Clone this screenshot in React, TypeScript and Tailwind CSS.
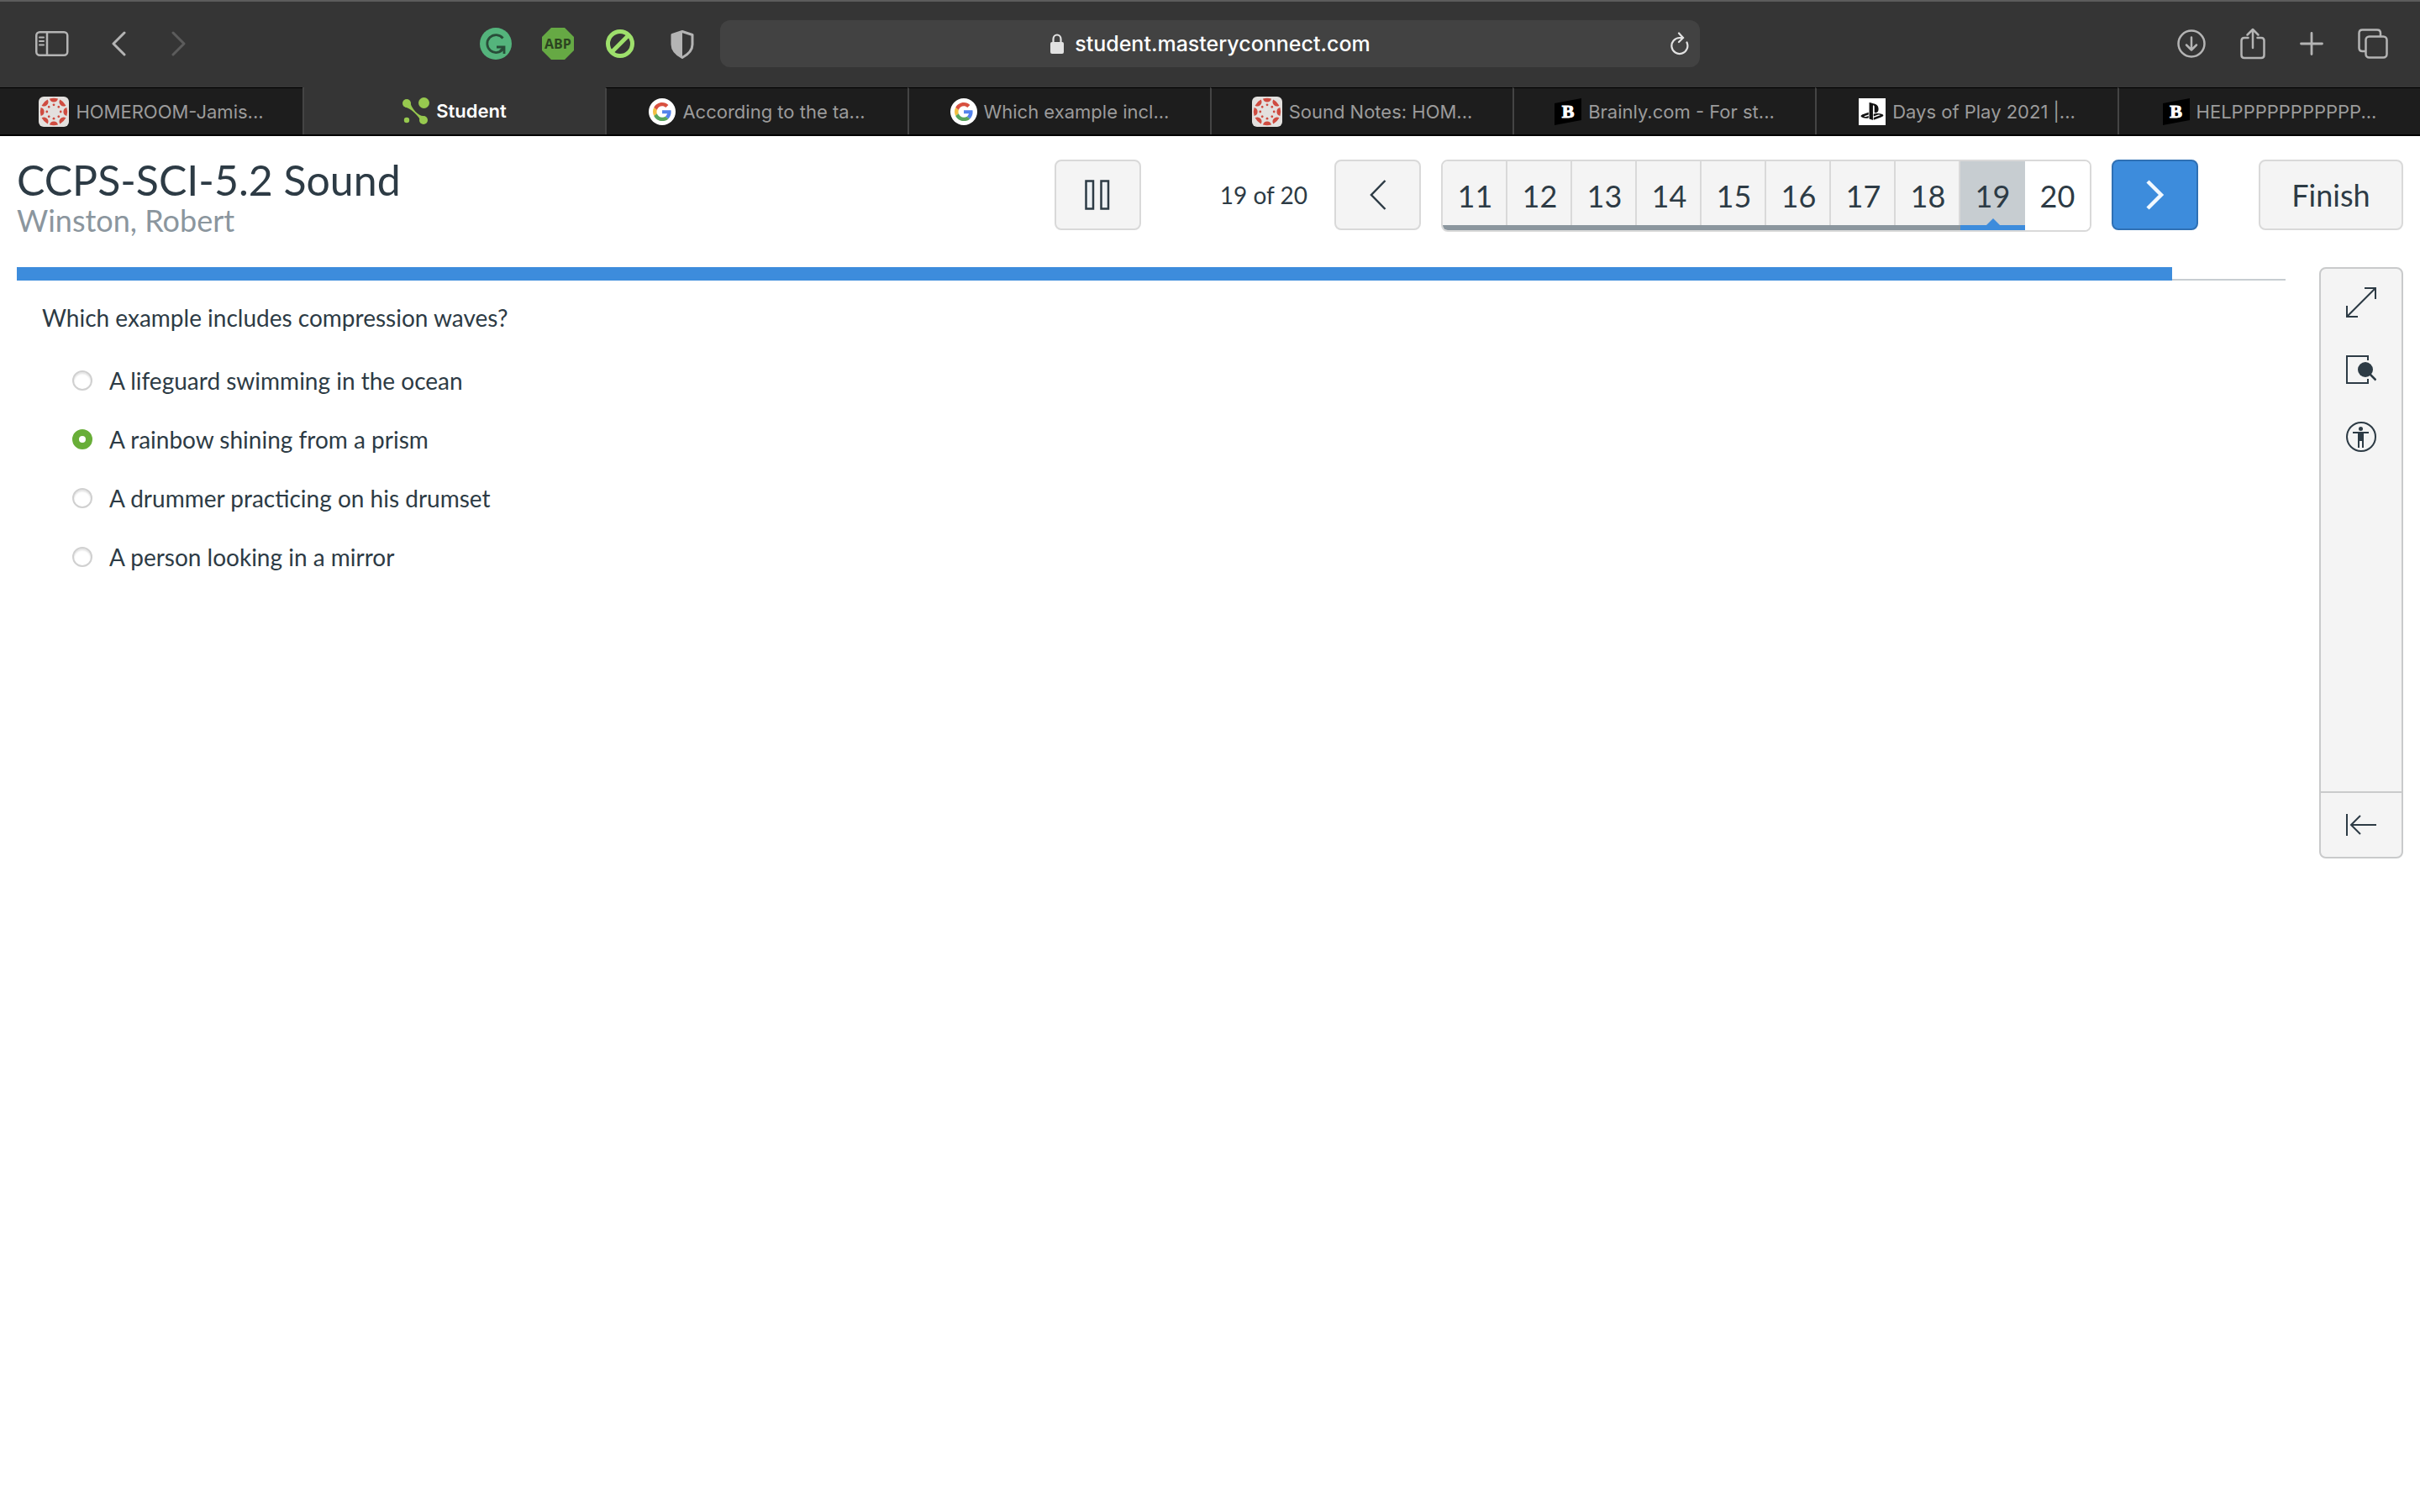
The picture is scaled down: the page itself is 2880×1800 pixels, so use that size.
import React, { useState } from "react";

const INK = "#2d3b45";

function CanvasIcon() {
  const petals = [0, 45, 90, 135, 180, 225, 270, 315];
  return (
    <svg viewBox="0 0 36 36" className="size-9 shrink-0">
      <rect width="36" height="36" rx="6" fill="#e3e0de" />
      {petals.map((a) => (
        <g key={a} transform={`rotate(${a} 18 18)`} fill="#cf4b40">
          <path d="M13 2.600Q18 1 23 2.600Q22 6.600 18 6.600Q14 6.600 13 2.600Z" />
          <circle cx="18" cy="9.800" r="1.400" />
        </g>
      ))}
    </svg>
  );
}

function MasteryIcon() {
  return (
    <svg viewBox="0 0 32 32" className="size-8 shrink-0" fill="#97c94f">
      <circle cx="5" cy="7" r="5" />
      <circle cx="25.500" cy="6.500" r="6.500" />
      <circle cx="5" cy="27" r="3.200" />
      <circle cx="25" cy="27" r="5" />
      <path d="M3 11.500Q9 13 14.500 18.500Q20 24 20.500 26L25 22Q21 22.500 15.500 17Q10 11 9.500 6Z" />
    </svg>
  );
}

function GoogleIcon() {
  return (
    <svg viewBox="0 0 32 32" className="size-8 shrink-0">
      <circle cx="16" cy="16" r="16" fill="#fff" />
      <g transform="translate(5 5) scale(0.460)">
        <path fill="#d8503f" d="M24 9.500c3.540 0 6.710 1.220 9.210 3.600l6.850-6.850C35.900 2.380 30.470 0 24 0 14.620 0 6.510 5.380 2.560 13.220l7.980 6.190C12.430 13.720 17.740 9.500 24 9.500z" />
        <path fill="#5383ec" d="M46.980 24.550c0-1.570-.15-3.090-.38-4.550H24v9.020h12.940c-.58 2.960-2.260 5.480-4.780 7.180l7.730 6c4.510-4.180 7.090-10.360 7.090-17.650z" />
        <path fill="#f2bf42" d="M10.530 28.590c-.48-1.450-.76-2.990-.76-4.590s.27-3.140.76-4.590l-7.980-6.190C.92 16.460 0 20.120 0 24c0 3.880.92 7.540 2.560 10.780l7.970-6.190z" />
        <path fill="#58a55c" d="M24 48c6.480 0 11.930-2.130 15.890-5.810l-7.730-6c-2.150 1.450-4.920 2.300-8.160 2.300-6.260 0-11.570-4.220-13.470-9.910l-7.980 6.190C6.510 42.620 14.620 48 24 48z" />
      </g>
    </svg>
  );
}

function BrainlyIcon() {
  return (
    <span className="relative flex size-8 shrink-0 items-center justify-center">
      <svg viewBox="0 0 32 32" className="absolute inset-0 size-8">
        <path d="M0 6L32 0V26L0 32Z" fill="#000" />
      </svg>
      <span className="relative font-['Liberation_Serif',serif] text-[22px] leading-none font-black text-white [-webkit-text-stroke:1px_white]">B</span>
    </span>
  );
}

function PlayStationIcon() {
  return (
    <svg viewBox="0 0 32 32" className="size-8 shrink-0">
      <rect width="32" height="32" fill="#fff" />
      <g transform="translate(2.500 2) scale(1.120)" fill="#111">
        <path d="M8.985 2.596v17.548l3.915 1.261V6.688c0-.69.304-1.151.794-.991.636.181.760.814.760 1.505v5.876c2.441 1.193 4.362-.002 4.362-3.153 0-3.237-1.126-4.675-4.438-5.827-1.307-.448-3.728-1.186-5.391-1.502h-.002zm4.656 16.242l6.296-2.275c.715-.258.826-.625.246-.818-.586-.192-1.637-.139-2.357.123l-4.205 1.499v-2.385l.240-.085s1.201-.420 2.913-.615c1.696-.180 3.785.029 5.437.661 1.848.601 2.041 1.472 1.576 2.072s-1.622 1.036-1.622 1.036l-8.544 3.107v-2.297l.020-.023zM1.808 18.600c-1.900-.545-2.214-1.668-1.352-2.321.801-.585 2.159-1.051 2.159-1.051l5.616-2.013v2.313L4.206 17c-.705.271-.825.632-.239.826.586.195 1.637.150 2.343-.120L8.248 17v2.074c-.120.030-.256.044-.390.073-1.938.330-3.996.196-6.051-.479l.001-.068z" />
      </g>
    </svg>
  );
}

const tabs = [
  { title: "HOMEROOM-Jamis...", icon: <CanvasIcon /> },
  { title: "Student", icon: <MasteryIcon />, active: true },
  { title: "According to the ta...", icon: <GoogleIcon /> },
  { title: "Which example incl...", icon: <GoogleIcon /> },
  { title: "Sound Notes: HOM...", icon: <CanvasIcon /> },
  { title: "Brainly.com - For st...", icon: <BrainlyIcon /> },
  { title: "Days of Play 2021 |...", icon: <PlayStationIcon /> },
  { title: "HELPPPPPPPPPPP...", icon: <BrainlyIcon /> },
];

function Toolbar() {
  return (
    <header className="flex h-[104px] items-center bg-[#353535] text-[#b4b4b4] shadow-[inset_0_2px_#5c5c5c]">
      <div className="flex flex-1 items-center justify-between pr-[26px] pl-[42px]">
        <div className="flex items-center">
          <button aria-label="Show sidebar">
            <svg viewBox="0 0 40 30" className="h-[30px] w-10" fill="none" stroke="currentColor" strokeWidth="2.500">
              <rect x="1.250" y="1.250" width="37" height="27.500" rx="4" />
              <path d="M14 1V29" />
              <path d="M5 7.500H10M5 12H10M5 16.500H10" strokeWidth="2" strokeLinecap="round" />
            </svg>
          </button>
          <button aria-label="Back" className="ml-[50px]">
            <svg viewBox="0 0 18 30" className="h-[30px] w-[18px]" fill="none" stroke="currentColor" strokeWidth="3" strokeLinecap="round" strokeLinejoin="round">
              <path d="M16 2L3 15L16 28" />
            </svg>
          </button>
          <button aria-label="Forward" className="ml-[54px] text-[#5c5c5c]" disabled>
            <svg viewBox="0 0 18 30" className="h-[30px] w-[18px]" fill="none" stroke="currentColor" strokeWidth="3" strokeLinecap="round" strokeLinejoin="round">
              <path d="M2 2L15 15L2 28" />
            </svg>
          </button>
        </div>
        <div className="flex items-center gap-9">
          <button aria-label="Grammarly">
            <svg viewBox="0 0 38 38" className="size-[38px]" fill="none">
              <circle cx="19" cy="19" r="19" fill="#54b47c" />
              <path d="M27.500 12.500A10.500 10.500 0 1 0 28 25" stroke="#294d39" strokeWidth="2.800" />
              <path d="M20 23H29V31" stroke="#294d39" strokeWidth="2.800" />
              <path d="M29 23L24 28" stroke="#294d39" strokeWidth="2.800" />
            </svg>
          </button>
          <button aria-label="Adblock Plus" className="relative flex size-[38px] items-center justify-center">
            <svg viewBox="0 0 38 38" className="absolute inset-0 size-[38px]">
              <path d="M11 0H27L38 11V27L27 38H11L0 27V11Z" fill="#66a944" />
            </svg>
            <span className="relative font-['Open_Sans',sans-serif] text-base leading-none font-bold text-[#2c4420]">ABP</span>
          </button>
          <button aria-label="Content blocker">
            <svg viewBox="0 0 38 38" className="size-[38px]" fill="none" stroke="#9ee06c" strokeWidth="5">
              <circle cx="19" cy="19" r="14.500" />
              <path d="M28.500 9.500L9.500 28.500" />
            </svg>
          </button>
          <button aria-label="Privacy report">
            <svg viewBox="0 0 38 38" className="size-[38px]">
              <path d="M19 4.500L31 8.500V20Q31 29 19 35.500Q7 29 7 20V8.500Z" fill="none" stroke="currentColor" strokeWidth="3" strokeLinejoin="round" />
              <path d="M19 4V35.500Q7 29 7 20V8.500Z" fill="currentColor" />
            </svg>
          </button>
        </div>
      </div>
      <div className="relative flex h-14 w-[1166px] items-center justify-center gap-3 rounded-xl bg-[#424242] text-[#e2e2e2]">
        <svg viewBox="0 0 18 24" className="h-6 w-[18px]">
          <rect x="1" y="10" width="16" height="14" rx="2" fill="currentColor" />
          <path d="M4.500 11V6.500A4.500 5 0 0 1 13.500 6.500V11" fill="none" stroke="currentColor" strokeWidth="2.200" />
        </svg>
        <span className="text-[25px] leading-8 font-medium text-white">student.masteryconnect.com</span>
        <button aria-label="Reload" className="absolute right-3">
          <svg viewBox="0 0 24 28" className="h-7 w-6" fill="none" stroke="currentColor" strokeWidth="2.200" strokeLinecap="round">
            <path d="M20.500 12.500A9.500 9.500 0 1 1 12 7H15.500" />
            <path d="M11 1.500L16 7L11 12" />
          </svg>
        </button>
      </div>
      <div className="flex flex-1 items-center justify-end gap-[41px] pr-[38px] pl-[30px]">
        <button aria-label="Downloads">
          <svg viewBox="0 0 34 34" className="size-[34px]" fill="none" stroke="currentColor" strokeWidth="2.500" strokeLinecap="round" strokeLinejoin="round">
            <circle cx="17" cy="17" r="15.500" />
            <path d="M17 9.500V24M11 18.500L17 24.500L23 18.500" />
          </svg>
        </button>
        <button aria-label="Share">
          <svg viewBox="0 0 30 38" className="h-[38px] w-[30px]" fill="none" stroke="currentColor" strokeWidth="2.500" strokeLinecap="round" strokeLinejoin="round">
            <path d="M9.500 12H5Q1.500 12 1.500 15.500V32.500Q1.500 36 5 36H25Q28.500 36 28.500 32.500V15.500Q28.500 12 25 12H20.500" />
            <path d="M15 24V2M8.500 8.500L15 2L21.500 8.500" />
          </svg>
        </button>
        <button aria-label="New tab">
          <svg viewBox="0 0 28 28" className="size-7" fill="none" stroke="currentColor" strokeWidth="2.800" strokeLinecap="round">
            <path d="M14 1.500V26.500M1.500 14H26.500" />
          </svg>
        </button>
        <button aria-label="Show all tabs">
          <svg viewBox="0 0 36 36" className="size-9" fill="none" stroke="currentColor" strokeWidth="2.500">
            <rect x="9.500" y="9.500" width="25" height="25" rx="4" />
            <path d="M9 27H5.500Q1.500 27 1.500 23V5.500Q1.500 1.500 5.500 1.500H23Q27 1.500 27 5.500V9" />
          </svg>
        </button>
      </div>
    </header>
  );
}

function TabStrip() {
  return (
    <nav className="grid h-[58px] grid-cols-8 border-b-2 border-black bg-[#1d1d1d]">
      {tabs.map((t, i) => (
        <a
          key={i}
          href="#"
          className={
            "flex items-center justify-center gap-2 border-l-2 border-l-[#444444] text-[22px] leading-7 whitespace-nowrap first:border-l-0 " +
            (t.active ? "bg-[#353535] font-semibold text-white" : "border-t border-t-black text-[#9b9b9b]")
          }
        >
          {t.icon}
          <span>{t.title}</span>
        </a>
      ))}
    </nav>
  );
}

const pages = [11, 12, 13, 14, 15, 16, 17, 18, 19, 20];
const boxBtn = "flex h-[84px] items-center justify-center rounded-lg border-2 ";

function QuizHeader() {
  return (
    <div className="flex items-start px-5 pt-7">
      <div className="mr-auto">
        <h1 className="text-[50px] leading-[48px]">CCPS-SCI-5.2 Sound</h1>
        <p className="text-[36px] leading-[48px] text-[#8b969e]">Winston, Robert</p>
      </div>
      <button aria-label="Pause" className={boxBtn + "w-[103px] border-[#d9d9d9] bg-[#f4f4f4]"}>
        <svg viewBox="0 0 30 36" className="h-9 w-[30px]" fill="#edf1f4" stroke={INK} strokeWidth="2.500">
          <rect x="1.500" y="1.500" width="8.500" height="33" />
          <rect x="19.500" y="1.500" width="8.500" height="33" />
        </svg>
      </button>
      <p className="mr-8 ml-[94px] text-[28px] leading-[84px]">19 of 20</p>
      <button aria-label="Previous" className={boxBtn + "w-[103px] border-[#d9d9d9] bg-[#f4f4f4]"}>
        <svg viewBox="0 0 20 36" className="h-9 w-5" fill="none" stroke={INK} strokeWidth="2.500">
          <path d="M18.500 1L2 18L18.500 35" />
        </svg>
      </button>
      <div className="ml-6 flex overflow-hidden rounded-lg border-2 border-[#d9d9d9]">
        {pages.map((n) => (
          <button
            key={n}
            className={
              "relative flex h-[82px] w-[77px] items-center justify-center text-[36px] " +
              (n < 19
                ? "bg-[#f4f4f4] shadow-[inset_0_-6px_#8b969e,inset_-2px_0_#d9d9d9]"
                : n === 19
                  ? "bg-[#c7cdd1] shadow-[inset_0_-6px_#3d8cdc]"
                  : "bg-white")
            }
          >
            {n}
            {n === 19 && (
              <svg viewBox="0 0 16 8" className="absolute bottom-1.5 h-2 w-4">
                <path d="M0 8L8 0L16 8Z" fill="#3d8cdc" />
              </svg>
            )}
          </button>
        ))}
      </div>
      <button aria-label="Next" className={boxBtn + "ml-6 w-[103px] border-[#2f70b4] bg-[#3d8cdc]"}>
        <svg viewBox="0 0 24 36" className="h-9 w-6" fill="none" stroke="#f2f9ff" strokeWidth="4.500">
          <path d="M3 2L19 18L3 34" />
        </svg>
      </button>
      <button className={boxBtn + "ml-[72px] w-[172px] border-[#d9d9d9] bg-[#f4f4f4] text-[36px]"}>Finish</button>
    </div>
  );
}

const options = [
  "A lifeguard swimming in the ocean",
  "A rainbow shining from a prism",
  "A drummer practicing on his drumset",
  "A person looking in a mirror",
];

function Question() {
  const [picked, setPicked] = useState(1);
  return (
    <main className="flex-1">
      <div role="progressbar" aria-valuenow={95} aria-label="Test progress" className="h-4 border-b-2 border-[#c7cdd1]">
        <div className="h-4 w-[95%] bg-[#3d8cdc]" />
      </div>
      <fieldset className="px-[30px] pt-6 text-[28px] leading-10">
        <legend className="contents">Which example includes compression waves?</legend>
        <div className="mt-[35px] ml-9 flex flex-col gap-[30px]">
          {options.map((o, i) => (
            <label key={o} className="flex items-center gap-5">
              <input
                type="radio"
                name="answer"
                checked={picked === i}
                onChange={() => setPicked(i)}
                className="size-6 appearance-none rounded-full border-2 border-[#d0d0d0] bg-white shadow-[inset_0_2px_2px_#e4e4e4] checked:border-[8px] checked:border-[#68ae38] checked:shadow-none"
              />
              {o}
            </label>
          ))}
        </div>
      </fieldset>
    </main>
  );
}

function ToolRail() {
  return (
    <aside className="flex h-[704px] w-[100px] flex-col rounded-lg border-2 border-[#c9cacb] bg-[#f4f4f4]">
      <div className="flex flex-1 flex-col items-center gap-11 pt-[22px]">
        <button aria-label="Full screen">
          <svg viewBox="0 0 36 36" className="size-9" fill="none" stroke={INK} strokeWidth="2">
            <path d="M2 34L34 2M22 1H35V14M1 22V35H14" />
          </svg>
        </button>
        <button aria-label="Zoom page">
          <svg viewBox="0 0 36 36" className="size-9" fill="none" stroke={INK} strokeWidth="2">
            <path d="M26 7V2H1V34H26V29" />
            <circle cx="23" cy="18" r="9" fill={INK} stroke="none" />
            <path d="M28 23L35.500 30.500" strokeWidth="2.500" />
          </svg>
        </button>
        <button aria-label="Accessibility">
          <svg viewBox="0 0 36 36" className="size-9" fill={INK}>
            <circle cx="18" cy="18" r="17" fill="none" stroke={INK} strokeWidth="2" />
            <circle cx="17.500" cy="8.500" r="2.500" />
            <path d="M8 12H27V14H21V31H19V23H16V31H14V14H8Z" />
          </svg>
        </button>
      </div>
      <button aria-label="Collapse toolbar" className="flex h-[78px] items-center justify-center border-t-2 border-[#c9cacb]">
        <svg viewBox="0 0 36 26" className="h-[26px] w-9" fill="none" stroke={INK} strokeWidth="2">
          <path d="M1 0V26M36 13H6M17 2L6 13L17 24" />
        </svg>
      </button>
    </aside>
  );
}

export default function App() {
  return (
    <div className="min-h-screen bg-white font-[Inter,sans-serif]">
      <Toolbar />
      <TabStrip />
      <div className="font-[Lato,sans-serif] text-[#2d3b45]">
        <QuizHeader />
        <div className="flex gap-10 px-5 pt-8">
          <Question />
          <ToolRail />
        </div>
      </div>
    </div>
  );
}
